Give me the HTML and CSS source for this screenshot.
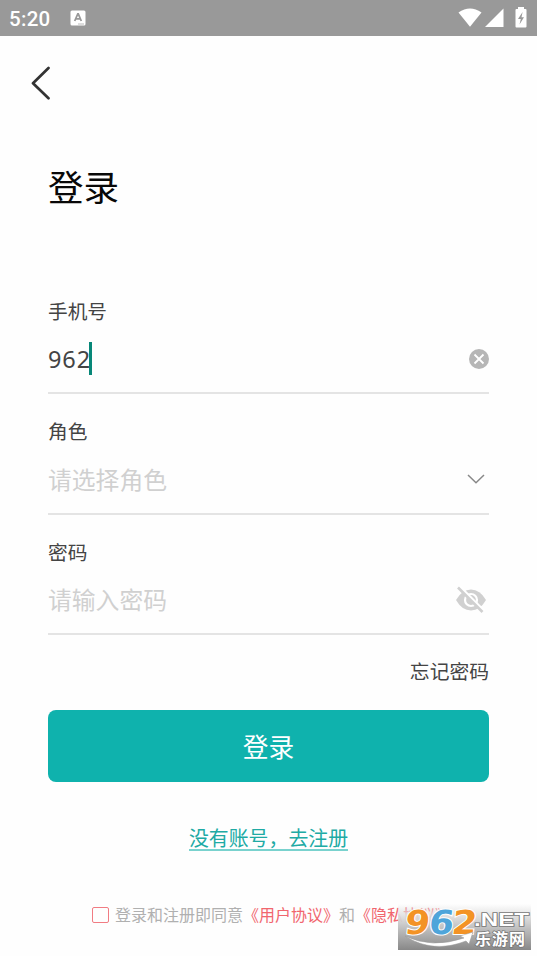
FILE: index.html
```html
<!DOCTYPE html>
<html lang="zh-CN">
<head>
<meta charset="utf-8">
<title>登录</title>
<link rel="stylesheet" href="styles.css">
</head>
<body>
<header class="status">
  <span class="time">5:20</span>
  <svg class="app-icon" width="16" height="16" viewBox="0 0 16 16"><rect x=".5" y=".5" width="15" height="15" rx="1.5" fill="#fff"/><path d="M4.700 11 7.800 4h.5l3 7M5.800 8.800h4.500" fill="none" stroke="#999" stroke-width="1.800"/><path d="M8 14h6" stroke="#aaa" stroke-width=".8"/></svg>
  <div class="signals">
    <svg width="24" height="20" viewBox="0 0 24 20"><path d="M.5 4.500Q12-3.500 23.500 4.500L12 18.800Z" fill="#fff"/></svg>
    <svg width="19" height="20" viewBox="0 0 19 20"><path d="M0 19 18.500.5V19Z" fill="#fff"/></svg>
    <svg class="battery" width="12" height="21" viewBox="0 0 12 21"><path d="M3 0h6v2h1.500q1 0 1 1v16.500q0 1-1 1h-9q-1 0-1-1V3q0-1 1-1H3Z" fill="#fff"/><path d="M7.600 5 3 12h2.800L4.500 17.500 9 10.200H6.500Z" fill="#999"/></svg>
  </div>
</header>
<main class="page">
  <svg class="back" width="20" height="34" viewBox="0 0 20 34"><path d="M17.500 2 2 17.300 17.500 32.300" fill="none" stroke="#333" stroke-width="2.700" stroke-linecap="round" stroke-linejoin="round"/></svg>
  <h1 class="title">登录</h1>
  <form class="form">
    <div class="field">
      <span class="label">手机号</span>
      <div class="control"><span class="value">962</span><i class="caret"></i>
        <svg class="icon clear" width="20" height="20" viewBox="0 0 20 20"><circle cx="10" cy="10" r="10" fill="#b6b6b6"/><path d="m5.500 5.500 9 9m0-9-9 9" stroke="#fff" stroke-width="1.800"/></svg>
      </div>
    </div>
    <div class="field">
      <span class="label">角色</span>
      <div class="control"><span class="hint">请选择角色</span>
        <svg class="icon down" width="18" height="10" viewBox="0 0 18 10"><path d="m1 1 8 7.700L17 1" fill="none" stroke="#888" stroke-width="1.500"/></svg>
      </div>
    </div>
    <div class="field">
      <span class="label">密码</span>
      <div class="control"><span class="hint">请输入密码</span>
        <svg class="icon eye" width="32" height="28" viewBox="0 0 32 28"><path d="M1 14Q7 3.500 16 3.500T31 14Q25 24.500 16 24.500T1 14Z" fill="#d0d0d0"/><circle cx="16" cy="14" r="6" fill="none" stroke="#fff" stroke-width="2.200"/><path d="M4.500.5 29 25" stroke="#fff" stroke-width="3"/><path d="M3 1.500 27.500 26" stroke="#d0d0d0" stroke-width="2.600"/></svg>
      </div>
    </div>
    <a class="forgot">忘记密码</a>
    <button class="submit" type="button">登录</button>
  </form>
  <a class="register">没有账号，去注册</a>
  <div class="agree"><i class="box"></i><span>登录和注册即同意<b>《用户协议》</b>和<b>《隐私协议》</b></span></div>
</main>
<div class="watermark">
  <svg width="133" height="50" viewBox="0 0 133 50">
    <g class="digits" transform="translate(5 0) skewX(-7)" paint-order="stroke" stroke="#fff" stroke-width="2">
      <text x="5" y="34" textLength="25" lengthAdjust="spacingAndGlyphs" fill="#f39325">9</text>
      <text x="29" y="34" textLength="25" lengthAdjust="spacingAndGlyphs" fill="#4ea5da">6</text>
      <text x="52" y="34" textLength="25" lengthAdjust="spacingAndGlyphs" fill="#f39325">2</text>
    </g>
    <g paint-order="stroke" stroke="#777" stroke-width="1.500" fill="#fff">
      <text class="net" x="76" y="26" textLength="55" lengthAdjust="spacingAndGlyphs">.NET</text>
      <text class="brand" x="77" y="45" textLength="50" lengthAdjust="spacing">乐游网</text>
    </g>
    <path d="M7 36Q34 49 66 38L62 36 75 32 71 44 68 41Q35 54 7 36Z" fill="#fff" stroke="#999" stroke-width=".5"/>
  </svg>
</div>
</body>
</html>
```
FILE: styles.css
```css
* { box-sizing: border-box; }
body {
  margin: 0;
  height: 956px;
  position: relative;
  overflow: hidden;
  background: #fefefe;
  color: #444;
  font-family: "Noto Sans CJK SC", sans-serif;
}
.status {
  height: 36px;
  padding: 0 10px 0 9px;
  display: flex;
  align-items: center;
  background: #999;
}
.time {
  width: 61px;
  padding-top: 1px;
  color: #fff;
  font: 500 20.5px/36px Roboto, sans-serif;
  letter-spacing: .3px;
}
.signals {
  margin-left: auto;
  display: flex;
  align-items: center;
  gap: 3px;
}
.signals svg { margin-top: -1px; }
.signals .battery { margin-left: 8px; }
.page {
  display: flex;
  flex-direction: column;
  padding: 30px 48px 0;
}
.back { margin-left: -17px; }
.title {
  margin: 60px 0 0;
  color: #080808;
  font-size: 35.5px;
  font-weight: 400;
  line-height: 52px;
}
.form {
  display: flex;
  flex-direction: column;
  margin-top: 83.5px;
}
.field {
  height: 98.5px;
  margin-bottom: 22px;
  border-bottom: 2px solid #e4e4e4;
}
.label {
  display: block;
  font-size: 19.7px;
  line-height: 30px;
}
.control {
  display: flex;
  align-items: center;
  height: 66px;
  font-size: 23.8px;
}
.value {
  font-family: "Noto Sans", sans-serif;
  font-size: 23.5px;
  letter-spacing: .9px;
}
.caret {
  width: 3px;
  height: 33px;
  margin-left: -2px;
  background: #078778;
}
.hint {
  color: #d0d0d0;
  padding-bottom: 2px;
}
.icon { margin-left: auto; }
.down { margin-right: 4px; }
.eye { margin-right: 2px; }
.forgot {
  align-self: flex-end;
  margin-top: -1px;
  font-size: 19.8px;
  line-height: 30px;
}
.submit {
  height: 72px;
  margin-top: 23px;
  padding: 0;
  border: 0;
  border-radius: 8px;
  background: #0fb2ad;
  color: #fff;
  font: 25.7px/72px "Noto Sans CJK SC", sans-serif;
}
.form { margin-bottom: 1px; }
.forgot + .submit { margin-top: 23.5px; }
.register {
  align-self: center;
  margin-top: 44px;
  color: #20aaa4;
  border-bottom: 2px solid #79d2ce;
  font-size: 19.9px;
  line-height: 22px;
}
.agree {
  display: flex;
  align-items: center;
  margin: 51px -48px 0 44px;
  color: #b0b0b0;
  font-size: 16px;
  line-height: 24px;
  white-space: nowrap;
}
.agree span { padding-bottom: 2px; }
.box {
  width: 17px;
  height: 16px;
  margin-right: 6px;
  border: 1px solid #f17c83;
  border-radius: 2px;
}
.agree b {
  color: #f1666e;
  font-weight: 400;
}
.watermark {
  position: absolute;
  left: 398px;
  top: 900px;
  width: 133px;
  height: 50px;
  background: linear-gradient(rgba(254,254,254,0) 8%, rgba(225,225,225,.9) 30%, #bbb 60%, #888);
}
.watermark svg { display: block; }
.digits { font: 700 33px "DejaVu Sans", sans-serif; }
.net { font: 700 18px "Liberation Sans", sans-serif; }
.brand { font: 700 16px "Noto Sans CJK SC", sans-serif; }
```
